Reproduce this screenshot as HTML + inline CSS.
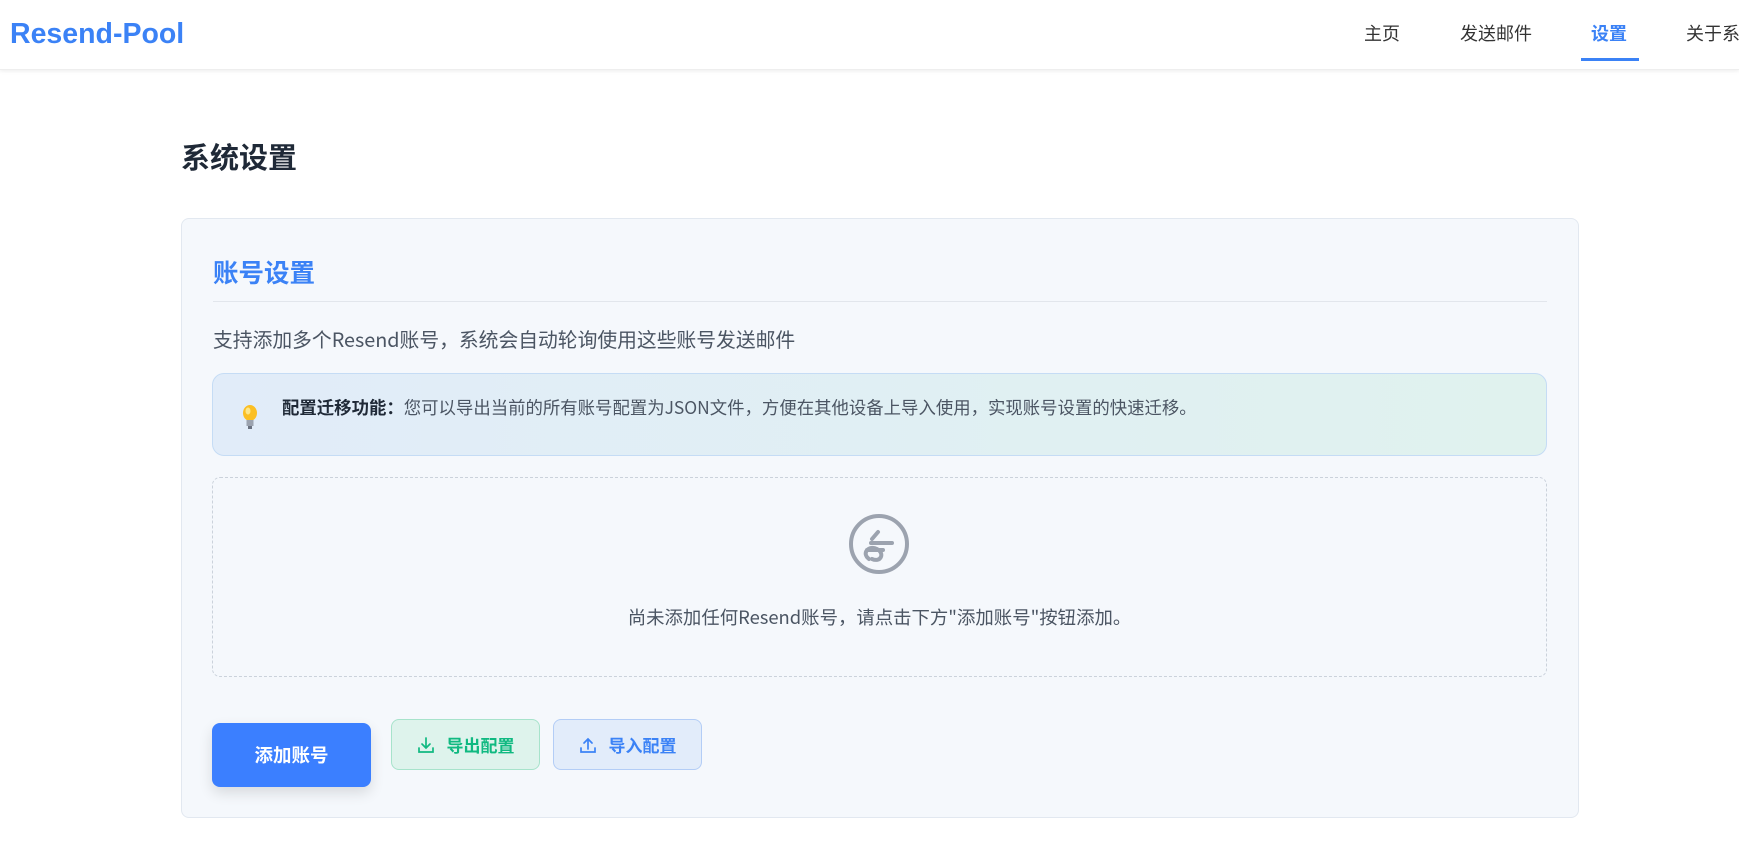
<!DOCTYPE html>
<html><head><meta charset="utf-8"><style>
*{margin:0;padding:0;box-sizing:border-box}
body{width:1739px;height:841px;overflow:hidden;background:#fff;font-family:"Noto Sans CJK SC",sans-serif;position:relative}
.hdr{position:absolute;left:0;top:0;width:1739px;height:70px;background:#fff;box-shadow:0 1px 4px rgba(0,0,0,.08);border-bottom:1px solid #eee}
.logo{position:absolute;left:10px;top:17px;font-family:"Liberation Sans",sans-serif;font-size:28.5px;font-weight:bold;color:#3b82f6;line-height:34px}
.nav{position:absolute;top:20px;font-size:18px;color:#333;line-height:26px;white-space:nowrap}
.ul{position:absolute;left:1581px;top:58px;width:58px;height:3px;background:#3b82f6}
.t{position:absolute;white-space:nowrap}
.card{position:absolute;left:181px;top:218px;width:1398px;height:600px;background:#f5f8fc;border:1px solid #e2e8f0;border-radius:8px}
.info{position:absolute;left:212px;top:373px;width:1335px;height:83px;border:1px solid #c5dcf5;border-radius:12px;background:linear-gradient(90deg,#e1ecf9,#e0f2ee)}
.empty{position:absolute;left:212px;top:477px;width:1335px;height:200px;border:1px dashed #cbd2db;border-radius:8px}
.btn{position:absolute;border-radius:8px;font-weight:bold;display:flex;align-items:center;justify-content:center}
</style></head><body>
<div class="hdr">
<div class="logo">Resend-Pool</div>
<div class="nav" style="left:1364px">主页</div>
<div class="nav" style="left:1460px">发送邮件</div>
<div class="nav" style="left:1591px;color:#3b82f6;font-weight:bold">设置</div>
<div class="nav" style="left:1686px">关于系统</div>
<div class="ul"></div>
</div>
<div class="t" style="left:181px;top:135px;font-size:29px;font-weight:bold;color:#1f2937;line-height:42px">系统设置</div>
<div class="card"></div>
<div class="t" style="left:213px;top:254px;font-size:25.5px;font-weight:bold;color:#3b82f6;line-height:36px">账号设置</div>
<div style="position:absolute;left:213px;top:301px;width:1334px;height:1px;background:#e2e6ec"></div>
<div class="t" style="left:213px;top:325px;font-size:19.8px;color:#4b5563;line-height:28px">支持添加多个Resend账号，系统会自动轮询使用这些账号发送邮件</div>
<div class="info"></div>
<svg style="position:absolute;left:241px;top:404px" width="18" height="27" viewBox="0 0 18 27"><ellipse cx="9" cy="9" rx="7" ry="8" fill="#fbbf24"/><ellipse cx="7" cy="7" rx="2.5" ry="3.5" fill="#fde68a"/><rect x="5.5" y="16" width="7" height="6" fill="#9ca3af"/><rect x="7" y="22" width="4" height="3" fill="#6b7280"/></svg>
<div class="t" style="left:282px;top:395px;font-size:17.4px;color:#4b5563;line-height:26px"><b style="color:#1f2937">配置迁移功能：</b>您可以导出当前的所有账号配置为JSON文件，方便在其他设备上导入使用，实现账号设置的快速迁移。</div>
<div class="empty"></div>
<svg style="position:absolute;left:847px;top:513px" width="64" height="64" viewBox="0 0 64 64" fill="none" stroke="#9ca3af" stroke-width="4" stroke-linecap="round"><circle cx="32" cy="31" r="28"/><path d="M25 26 L31 19 M24 30 H45 M36 37 H20 M22 46 C14 40 22 32 30 36 C38 40 34 50 25 46"/></svg>
<div class="t" style="left:0;width:1759px;text-align:center;top:604px;font-size:18.4px;color:#4b5563;line-height:26px">尚未添加任何Resend账号，请点击下方"添加账号"按钮添加。</div>
<div class="btn" style="left:212px;top:723px;width:159px;height:64px;background:#3b7fff;color:#fff;font-size:18.5px;box-shadow:0 6px 14px rgba(0,0,0,.12)">添加账号</div>
<div class="btn" style="left:391px;top:719px;width:149px;height:51px;background:#def3ec;border:1px solid #a7e3cb;color:#10b981;font-size:17px"><svg width="18" height="18" viewBox="0 0 18 18" fill="none" stroke="#10b981" stroke-width="1.7" stroke-linecap="round" style="margin-right:12px"><path d="M9 2v10M5 8l4 4 4-4M2 12v4h14v-4"/></svg>导出配置</div>
<div class="btn" style="left:553px;top:719px;width:149px;height:51px;background:#e2ecfa;border:1px solid #b3cdf6;color:#3b82f6;font-size:17px"><svg width="18" height="18" viewBox="0 0 18 18" fill="none" stroke="#3b82f6" stroke-width="1.7" stroke-linecap="round" style="margin-right:12px"><path d="M9 13V3M5 7l4-4 4 4M2 12v4h14v-4"/></svg>导入配置</div>
</body></html>
